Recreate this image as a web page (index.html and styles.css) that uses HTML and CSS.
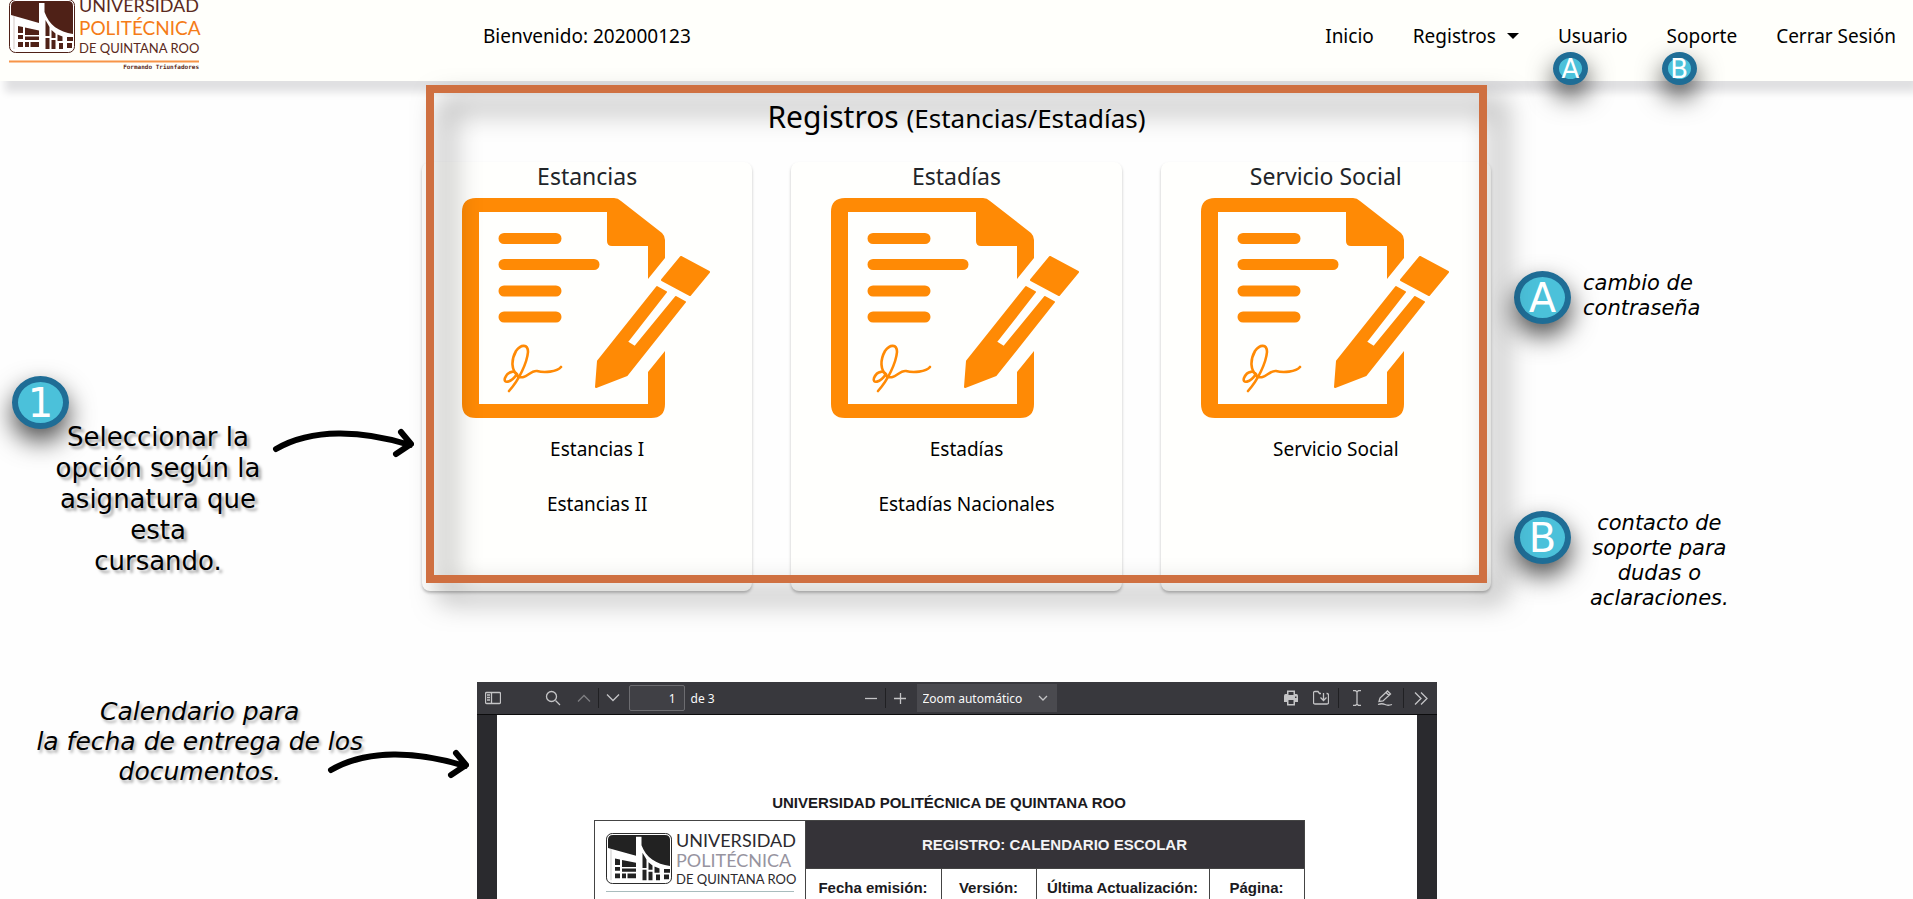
FILE: index.html
```html
<!DOCTYPE html>
<html lang="es">
<head>
<meta charset="utf-8">
<title>Registros (Estancias/Estadías)</title>
<link rel="stylesheet" href="styles.css">
</head>
<body>
<svg class="sprite" aria-hidden="true">
  <symbol id="emblem" viewBox="0 0 66 54" preserveAspectRatio="none">
    <rect x="0.5" y="0.5" width="65" height="53" rx="6" fill="#fff" stroke="currentColor"/>
    <path d="M2 16V7Q2 2 7 2H59Q64 2 64 7V35C50 33 40 26 35.500 13V4H30V24Z" fill="currentColor"/>
    <path d="M9 27l5 1v6H9zM16 28.500l14 3V36H16zM9 36h5v4H9zM16 37.500h14V41H16zM9 43h5v5H9zM16 43h4v5h-4zM21.500 43H30v5h-8.500zM36.500 21l4 7v9h-4zM42.500 31l4 3.500V39h-4zM48.500 35.500l5 2V42h-5zM58 38h6v4h-6zM36.500 39h4v11h-4zM42.500 41h4v9h-4zM50 44h4v6h-4zM58 44h5v5h-5z" fill="currentColor"/>
    <path d="M5 17V50" stroke="currentColor" stroke-width="0.500" opacity="0.500"/>
  </symbol>
  <symbol id="form" viewBox="0 0 248 220">
    <path fill="currentColor" d="M14 0H152Q156 0 159 3L200 35Q203 38 203 42V60L186 81V48H150Q145 48 145 43V14H17V206H186V174L203 153V206Q203 220 189 220H14Q0 220 0 206V14Q0 0 14 0Z"/>
    <path stroke="currentColor" stroke-width="11" stroke-linecap="round" d="M42 40.500H94M42 66.500H132M42 93H94M42 119H94"/>
    <path fill="currentColor" stroke="currentColor" stroke-width="2" stroke-linejoin="round" d="M219 59L247 74L228 97L200 82ZM195 89L204 94L165 144L173 149L214 99L223 104L165 177L134 189L136 163Z"/>
    <path fill="none" stroke="currentColor" stroke-width="2.600" stroke-linecap="round" d="M47 193C57 182 65 165 66 154C66 146 59 146 54 153C49 162 49 172 56 178C63 183 68 172 75 173C82 175 95 174 99 169M56 179C54 171 46 173 43 180C41 186 49 185 55 176"/>
  </symbol>
  <symbol id="arrow" viewBox="0 0 142 30">
    <path d="M4 21C40 0 90 2 138 17M129 4L139 16L124 26" fill="none" stroke="#000" stroke-width="6" stroke-linecap="round" stroke-linejoin="round"/>
  </symbol>
</svg>

<header class="navbar">
  <a class="brand" href="#" aria-label="Universidad Politécnica de Quintana Roo">
    <svg width="192" height="73" viewBox="0 0 192 73">
      <use href="#emblem" x="0" y="0" width="66" height="54" color="#4f2117"/>
      <g font-family="Lato, sans-serif" fill="#5a2a20">
        <text x="70" y="13" font-size="18">UNIVERSIDAD</text>
        <text x="70" y="36" font-size="19" fill="#f57c17">POLITÉCNICA</text>
        <text x="70" y="54" font-size="13">DE QUINTANA ROO</text>
        <text x="190" y="70" font-size="6" font-weight="bold" font-family="DejaVu Sans Mono, monospace" text-anchor="end">Formando Triunfadores</text>
      </g>
      <path d="M0 62.500H190" stroke="#f79447" stroke-width="2"/>
    </svg>
  </a>
  <p class="greeting">Bienvenido: 202000123</p>
  <nav>
    <ul class="menu">
      <li><a href="#">Inicio</a></li>
      <li><button class="dropdown" type="button">Registros <span class="caret"></span></button></li>
      <li><a href="#">Usuario</a><span class="badge badge-small">A</span></li>
      <li><a href="#">Soporte</a><span class="badge badge-small">B</span></li>
      <li><a href="#">Cerrar Sesión</a></li>
    </ul>
  </nav>
</header>

<section class="records">
  <aside class="guide">
    <div class="guide-note">
      <span class="badge">1</span>
      <p>Seleccionar la<br>opción según la<br>asignatura que<br>esta<br>cursando.</p>
    </div>
    <svg class="arrow" width="142" height="30" aria-hidden="true"><use href="#arrow"/></svg>
  </aside>

  <main class="panel">
    <h1>Registros <small>(Estancias/Estadías)</small></h1>
    <div class="cards">
      <article class="card">
        <h2>Estancias</h2>
        <svg class="form-icon" aria-hidden="true"><use href="#form"/></svg>
        <ul><li><a href="#">Estancias I</a></li><li><a href="#">Estancias II</a></li></ul>
      </article>
      <article class="card">
        <h2>Estadías</h2>
        <svg class="form-icon" aria-hidden="true"><use href="#form"/></svg>
        <ul><li><a href="#">Estadías</a></li><li><a href="#">Estadías Nacionales</a></li></ul>
      </article>
      <article class="card">
        <h2>Servicio Social</h2>
        <svg class="form-icon" aria-hidden="true"><use href="#form"/></svg>
        <ul><li><a href="#">Servicio Social</a></li></ul>
      </article>
    </div>
    <div class="frame"></div>
  </main>

  <aside class="legend">
    <div class="legend-item">
      <span class="badge">A</span>
      <p>cambio de<br>contraseña</p>
    </div>
    <div class="legend-item legend-centered">
      <span class="badge">B</span>
      <p>contacto de<br>soporte para<br>dudas o<br>aclaraciones.</p>
    </div>
  </aside>
</section>

<section class="calendar">
  <aside class="calendar-note">
    <p>Calendario para<br>la fecha de entrega de los<br>documentos.</p>
    <svg class="arrow" width="142" height="30" aria-hidden="true"><use href="#arrow"/></svg>
  </aside>

  <div class="viewer">
    <div class="toolbar">
      <div class="tools tools-left">
        <button type="button" class="sidebar-toggle" aria-label="Barra lateral"><svg viewBox="0 0 16 16"><rect x="0.500" y="2.500" width="15" height="11" rx="1"/><path d="M6.500 2.500v11M2 5h3M2 7.500h3M2 10h3"/></svg></button>
        <button type="button" aria-label="Buscar"><svg viewBox="0 0 16 16"><circle cx="6.500" cy="6.500" r="5"/><path d="M10.500 10.500L15 15"/></svg></button>
        <button type="button" class="page-up" aria-label="Página anterior" disabled><svg viewBox="0 0 16 16"><path d="M2 11.500l6-6 6 6"/></svg></button>
        <span class="divider"></span>
        <button type="button" aria-label="Página siguiente"><svg viewBox="0 0 16 16"><path d="M2 4.500l6 6 6-6"/></svg></button>
        <input id="page" type="text" value="1" aria-label="Página">
        <label for="page">de 3</label>
      </div>
      <div class="tools">
        <button type="button" aria-label="Reducir"><svg viewBox="0 0 16 16"><path d="M2 8.500h12"/></svg></button>
        <span class="divider"></span>
        <button type="button" aria-label="Aumentar"><svg viewBox="0 0 16 16"><path d="M2 8.500h12M8.500 3v11"/></svg></button>
        <div class="zoom">
          <select aria-label="Zoom"><option>Zoom automático</option></select>
          <svg viewBox="0 0 16 16" aria-hidden="true"><path d="M4 6l4 4 4-4"/></svg>
        </div>
      </div>
      <div class="tools tools-right">
        <button type="button" aria-label="Imprimir"><svg viewBox="0 0 16 16"><path class="solid" d="M4 0.500h8V4h1.500Q15 4 15 6v6h-3v3.500H4V12H1V6Q1 4 2.500 4H4z"/><path class="cut" d="M5.500 2h5v3h-5zM5.500 10h5v4h-5zM12 6.500h1.500V8H12z"/></svg></button>
        <button type="button" class="download" aria-label="Descargar"><svg viewBox="0 0 16 16"><path d="M8 3.500H6.500L5 1.500H2Q0.500 1.500 0.500 3v9.500Q0.500 14 2 14h12q1.500 0 1.500-1.500V5Q15.500 3.500 14 3.500h-.5M10.500 3v7M7.500 7.500l3 3 3-3"/></svg></button>
        <span class="divider"></span>
        <button type="button" class="text-tool" aria-label="Seleccionar texto"><svg viewBox="0 0 16 16"><path d="M4 0.500h2.500L8 2l1.500-1.500H12M8 2v12M4 15.500h2.500L8 14l1.500 1.500H12"/></svg></button>
        <button type="button" aria-label="Dibujar"><svg viewBox="0 0 16 16"><path d="M2 11.500L3 8l7.500-7 3 3L6 11zM9 2.500l3 3M1 14.500q4-1.500 7 0t7 0"/></svg></button>
        <span class="divider divider-more"></span>
        <button type="button" aria-label="Más herramientas"><svg viewBox="0 0 16 16"><path d="M2 2.500l6 6-6 6M8 2.500l6 6-6 6"/></svg></button>
      </div>
    </div>
    <div class="document">
      <h2>UNIVERSIDAD POLITÉCNICA DE QUINTANA ROO</h2>
      <table>
        <colgroup><col class="col-logo"><col class="col-date"><col class="col-version"><col class="col-update"><col class="col-page"></colgroup>
        <tr>
          <td class="logo-cell" rowspan="2">
            <svg width="194" height="60" viewBox="0 0 194 60" role="img" aria-label="Universidad Politécnica de Quintana Roo">
              <use href="#emblem" x="0" y="0" width="66" height="51" color="#222"/>
              <g font-family="Lato, sans-serif" fill="#2c2a2e">
                <text x="70" y="14" font-size="18">UNIVERSIDAD</text>
                <text x="70" y="34" font-size="18" fill="#97949f">POLITÉCNICA</text>
                <text x="70" y="51" font-size="13">DE QUINTANA ROO</text>
              </g>
              <path d="M0 58.500H188" stroke="#a9bcbd"/>
            </svg>
          </td>
          <th class="heading" colspan="4">REGISTRO: CALENDARIO ESCOLAR</th>
        </tr>
        <tr><th>Fecha emisión:</th><th>Versión:</th><th>Última Actualización:</th><th>Página:</th></tr>
      </table>
    </div>
  </div>
</section>
</body>
</html>
```
FILE: styles.css
```css
* { box-sizing: border-box; }

body {
  margin: 0;
  height: 100vh;
  overflow: hidden;
  display: flex;
  flex-direction: column;
  background: #fefefe;
  color: #000;
  font-family: "Noto Sans", "Open Sans", sans-serif;
  font-size: 19px;
}

h1, h2, p, ul { margin: 0; padding: 0; font-weight: normal; }
ul { list-style: none; }
a { color: inherit; text-decoration: none; }
button { border: 0; padding: 0; background: none; color: inherit; font: inherit; }

.sprite { position: absolute; width: 0; height: 0; }

/* Navigation */
.navbar {
  flex: none;
  display: flex;
  align-items: flex-start;
  height: 81px;
  padding: 0 17px 0 9px;
  background: #fffffb;
  box-shadow: 5px 11px 8px #e0e0e2;
}
.brand { flex: none; margin-top: -1px; height: 73px; }
.brand svg { overflow: visible; }
.greeting { margin-left: 282px; line-height: 72px; }
.navbar nav { margin-left: auto; }
.menu { display: flex; gap: 39px; line-height: 72px; }
.menu li { position: relative; }
.dropdown { display: flex; align-items: center; gap: 11px; }
.caret { border: 6px solid transparent; border-top-color: #000; border-bottom: 0; }

.badge {
  flex: none;
  display: flex;
  align-items: center;
  justify-content: center;
  width: 57px;
  height: 53px;
  border: 6px solid #1f6d96;
  border-radius: 50%;
  background: #4bc1da;
  color: #fff;
  box-shadow: 0 12px 26px rgba(0, 0, 0, 0.7);
  font: 40px/40px "DejaVu Sans", sans-serif;
}
.badge-small {
  position: absolute;
  top: 52px;
  left: -5px;
  width: 35px;
  height: 33px;
  font-size: 26px;
  line-height: 22px;
}

/* Record selection */
.records {
  flex: none;
  display: grid;
  grid-template-columns: 1fr minmax(0, 1069px) 1fr;
  align-items: start;
}
.guide {
  display: flex;
  align-items: flex-start;
  justify-content: flex-end;
  gap: 8px;
  padding: 341px 8px 0 0;
}
.guide-note {
  position: relative;
  width: 212px;
  text-align: center;
  white-space: nowrap;
  font: 26px/31px "DejaVu Sans", sans-serif;
  text-shadow: 3px 3px 3px rgba(0, 0, 0, 0.35);
}
.guide-note .badge { position: absolute; top: -46px; left: -40px; text-shadow: none; }
.arrow { flex: none; }
.guide .arrow { margin-top: 6px; }

.panel { position: relative; }
.panel h1 { padding-top: 14px; text-align: center; font-size: 30px; line-height: 44px; }
.panel h1 small { font-size: 26px; }
.cards {
  display: grid;
  grid-template-columns: repeat(3, 1fr);
  gap: 39px;
  margin-top: 22px;
}
.card {
  height: 429px;
  border-radius: 8px;
  background: #fffffd;
  box-shadow: 0 2px 3px rgba(0, 0, 0, 0.25);
  text-align: center;
}
.card h2 { color: #212529; font-size: 23px; line-height: 28px; }
.form-icon {
  display: block;
  width: 248px;
  height: 220px;
  margin: 8px auto 0 40px;
  color: #ff8a05;
}
.card ul { padding: 4px 0 0 20px; line-height: 55px; }
.frame {
  position: absolute;
  inset: 4px 4px 8px;
  border: 8px solid #cf7041;
  filter: drop-shadow(16px 16px 14px rgba(0, 0, 0, 0.55));
  pointer-events: none;
}

.legend {
  padding: 190px 0 0 23px;
  font: italic 21px/25px "DejaVu Sans", sans-serif;
}
.legend-item { display: flex; align-items: flex-start; gap: 12px; }
.legend-centered { margin-top: 187px; gap: 19px; text-align: center; }
.legend .badge { font-style: normal; }

/* Calendar viewer */
.calendar {
  flex: 1;
  min-height: 0;
  display: grid;
  grid-template-columns: 1fr minmax(0, 960px) 1fr;
  padding-top: 71px;
}
.calendar-note {
  position: relative;
  padding: 15px 77px 0 0;
  display: flex;
  justify-content: center;
  align-items: flex-start;
  text-align: center;
  font: italic 25px/30px "DejaVu Sans", sans-serif;
  white-space: nowrap;
  text-shadow: 2px 3px 3px rgba(0, 0, 0, 0.3);
}
.calendar-note .arrow { position: absolute; top: 67px; right: 8px; }

.viewer {
  min-height: 0;
  display: flex;
  flex-direction: column;
  overflow: hidden;
  background: #2a2a2e;
}
.toolbar {
  flex: none;
  display: grid;
  grid-template-columns: 1fr auto 1fr;
  height: 33px;
  border-bottom: 1px solid #0c0c0d;
  background: #38383d;
  color: #f9f9fa;
  font-size: 12px;
}
.tools { display: flex; align-items: center; }
.tools-left { padding-left: 2px; }
.tools-right { justify-content: flex-end; padding-right: 2px; }
.toolbar button { flex: none; width: 28px; height: 28px; display: grid; place-items: center; }
.toolbar svg { width: 16px; height: 16px; fill: none; stroke: #c4c4c6; stroke-width: 1.3; }
.toolbar .solid { fill: #c4c4c6; stroke: none; }
.toolbar .cut { fill: #38383d; stroke: none; }
.toolbar .sidebar-toggle { margin-right: 32px; }
.toolbar .page-up { margin-left: 3px; opacity: 0.5; }
.toolbar .download { margin: 0 3px 0 2px; }
.toolbar .text-tool { margin-left: 4px; }
.divider { width: 1px; height: 20px; background: #202023; }
.divider-more { margin: 0 3px 0 4px; }
.toolbar input {
  width: 56px;
  height: 26px;
  margin: 0 6px 0 2px;
  padding: 0 8px;
  border: 1px solid #6c6c70;
  border-radius: 2px;
  background: #404045;
  color: inherit;
  font: inherit;
  text-align: right;
}
.zoom { position: relative; margin-left: 3px; }
.zoom select {
  width: 140px;
  height: 28px;
  padding: 0 6px;
  border: 0;
  appearance: none;
  background: #4a4a4f;
  color: inherit;
  font: inherit;
}
.zoom svg { position: absolute; right: 6px; top: 6px; }

.document {
  flex: 1;
  min-height: 0;
  margin: 0 20px;
  padding: 79px 112px 0 97px;
  background: #fff;
  color: #1b1a1e;
  font-family: "Liberation Sans", Arial, sans-serif;
}
.document h2 { text-align: center; font-size: 15px; font-weight: bold; line-height: 18px; }
.document table {
  width: 100%;
  margin-top: 8px;
  border-collapse: collapse;
  table-layout: fixed;
}
.document th, .document td { height: 38px; padding: 0; border: 1px solid #444; font-size: 15px; }
.document .heading { height: 48px; background: #353338; color: #f3f3f5; }
.document .logo-cell { padding: 12px 0 0 11px; vertical-align: top; }
.logo-cell svg { display: block; }
.col-logo { width: 211px; }
.col-date { width: 136px; }
.col-version { width: 95px; }
.col-update { width: 173px; }
```
